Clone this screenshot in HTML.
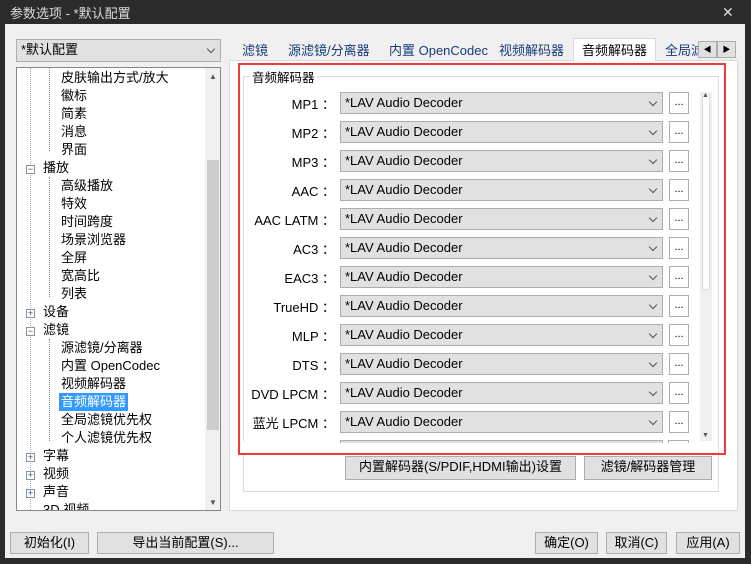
<!DOCTYPE html><html><head><meta charset="utf-8"><style>
*{box-sizing:border-box}
body{margin:0;width:751px;height:564px;background:#2b2b2b;font-family:"Liberation Sans","Noto Sans CJK SC",sans-serif;font-size:12.5px;color:#000;position:relative;overflow:hidden}
.a{position:absolute}
.title{left:10px;top:3px;color:#ddd;font-size:13px}
.win{left:5px;top:24px;width:740px;height:534px;background:#f0f0f0}
.combo{background:#e1e1e1;border:1px solid #adadad;font-size:13px;line-height:20px;padding-left:4px;white-space:nowrap}
.chev{position:absolute;right:6px;top:6px;width:6px;height:6px;border-right:1px solid #555;border-bottom:1px solid #555;transform:rotate(45deg)}
.btn{background:#e1e1e1;border:1px solid #adadad;text-align:center;line-height:20px;font-size:13px}
.tree{left:16px;top:67px;width:205px;height:444px;background:#fff;border:1px solid #828790;overflow:hidden}
.ti{position:absolute;font-size:13px;line-height:18px;white-space:nowrap}
.dot{position:absolute;border-left:1px dotted #888}
.ex{position:absolute;width:9px;height:9px;border:1px solid #919191;background:#fff;font-size:9px;line-height:7px;text-align:center;color:#1f4f9f}
.tab{position:absolute;top:40px;font-size:13px;color:#1a3a7a;white-space:nowrap}
.lbl{position:absolute;width:95px;text-align:right;font-size:13px;left:240px;white-space:nowrap}
</style></head><body>
<div class="a title">参数选项 - *默认配置</div>
<div class="a" style="left:722px;top:4px;color:#ddd;font-size:14px">✕</div>
<div class="a win"></div>
<div class="a combo" style="left:16px;top:39px;width:205px;height:23px">*默认配置<span class="chev"></span></div>
<div class="a tree">
 <div class="dot" style="left:13px;top:0;height:444px;border-color:#aaa"></div>
 <div class="dot" style="left:32px;top:0;height:83px"></div>
 <div class="ti" style="left:44px;top:1px">皮肤输出方式/放大</div>
 <div class="ti" style="left:44px;top:19px">徽标</div>
 <div class="ti" style="left:44px;top:37px">简素</div>
 <div class="ti" style="left:44px;top:55px">消息</div>
 <div class="ti" style="left:44px;top:73px">界面</div>
 <div class="ex" style="left:9px;top:97px">−</div><div class="ti" style="left:26px;top:91px">播放</div>
 <div class="dot" style="left:32px;top:109px;height:120px"></div>
 <div class="ti" style="left:44px;top:109px">高级播放</div>
 <div class="ti" style="left:44px;top:127px">特效</div>
 <div class="ti" style="left:44px;top:145px">时间跨度</div>
 <div class="ti" style="left:44px;top:163px">场景浏览器</div>
 <div class="ti" style="left:44px;top:181px">全屏</div>
 <div class="ti" style="left:44px;top:199px">宽高比</div>
 <div class="ti" style="left:44px;top:217px">列表</div>
 <div class="ex" style="left:9px;top:241px">+</div><div class="ti" style="left:26px;top:235px">设备</div>
 <div class="ex" style="left:9px;top:259px">−</div><div class="ti" style="left:26px;top:253px">滤镜</div>
 <div class="dot" style="left:32px;top:271px;height:102px"></div>
 <div class="ti" style="left:44px;top:271px">源滤镜/分离器</div>
 <div class="ti" style="left:44px;top:289px">内置 OpenCodec</div>
 <div class="ti" style="left:44px;top:307px">视频解码器</div>
 <div class="ti" style="left:42px;top:325px;background:#3399ff;color:#fff;padding:0 2px">音频解码器</div>
 <div class="ti" style="left:44px;top:343px">全局滤镜优先权</div>
 <div class="ti" style="left:44px;top:361px">个人滤镜优先权</div>
 <div class="ex" style="left:9px;top:385px">+</div><div class="ti" style="left:26px;top:379px">字幕</div>
 <div class="ex" style="left:9px;top:403px">+</div><div class="ti" style="left:26px;top:397px">视频</div>
 <div class="ex" style="left:9px;top:421px">+</div><div class="ti" style="left:26px;top:415px">声音</div>
 <div class="ti" style="left:26px;top:433px">3D 视频</div>
 <div class="a" style="left:188px;top:0;width:16px;height:442px;background:#f0f0f0"></div>
 <div class="a" style="left:190px;top:92px;width:12px;height:270px;background:#cdcdcd"></div>
 <div class="a" style="left:192px;top:4px;font-size:8px;color:#555">▲</div>
 <div class="a" style="left:192px;top:430px;font-size:8px;color:#555">▼</div>
</div>
<div class="a" style="left:229px;top:60px;width:509px;height:451px;background:#fff;border:1px solid #d9d9d9"></div>
<div class="tab" style="left:242px">滤镜</div>
<div class="tab" style="left:288px">源滤镜/分离器</div>
<div class="tab" style="left:389px">内置 OpenCodec</div>
<div class="tab" style="left:499px">视频解码器</div>
<div class="a" style="left:573px;top:38px;width:83px;height:23px;background:#fff;border:1px solid #d9d9d9;border-bottom:none"></div>
<div class="tab" style="left:582px;color:#000">音频解码器</div>
<div class="tab" style="left:665px">全局滤</div>
<div class="a btn" style="left:698px;top:41px;width:19px;height:17px;font-size:8px;line-height:15px">◀</div>
<div class="a btn" style="left:717px;top:41px;width:19px;height:17px;font-size:8px;line-height:15px">▶</div>
<div class="a" style="left:243px;top:76px;width:476px;height:416px;border:1px solid #dcdcdc"></div>
<div class="a" style="left:250px;top:67px;background:#fff;padding:0 2px">音频解码器</div>
<div class="a" style="left:700px;top:92px;width:12px;height:350px;background:#f0f0f0"></div>
<div class="a" style="left:702px;top:94px;width:8px;height:196px;background:#fff;border:1px solid #ddd"></div>
<div class="a" style="left:702px;top:92px;font-size:7px;color:#555">▲</div>
<div class="a" style="left:702px;top:432px;font-size:7px;color:#555">▼</div>
<div id="rows"></div>
<div class="a" style="left:240px;top:441px;width:476px;height:12px;background:#fff"></div>
<div class="a" style="left:340px;top:440px;width:323px;height:3px;background:#e1e1e1;border:1px solid #adadad;border-bottom:none"></div>
<div class="a" style="left:668px;top:440px;width:21px;height:3px;border:1px solid #adadad;border-bottom:none"></div>
<div class="a" style="left:238px;top:63px;width:488px;height:392px;border:2px solid #f03a3a"></div>
<div class="a btn" style="left:345px;top:456px;width:231px;height:24px">内置解码器(S/PDIF,HDMI输出)设置</div>
<div class="a btn" style="left:584px;top:456px;width:128px;height:24px">滤镜/解码器管理</div>
<div class="a btn" style="left:10px;top:532px;width:79px;height:22px">初始化(I)</div>
<div class="a btn" style="left:97px;top:532px;width:177px;height:22px">导出当前配置(S)...</div>
<div class="a btn" style="left:535px;top:532px;width:63px;height:22px">确定(O)</div>
<div class="a btn" style="left:606px;top:532px;width:61px;height:22px">取消(C)</div>
<div class="a btn" style="left:676px;top:532px;width:64px;height:22px">应用(A)</div>
<script>
var L=["MP1","MP2","MP3","AAC","AAC LATM","AC3","EAC3","TrueHD","MLP","DTS","DVD LPCM","蓝光 LPCM"],h="";
L.forEach(function(n,i){var y=92+i*29;
h+='<div class="lbl" style="top:'+(y+2)+'px">'+n+' ：</div><div class="a combo" style="left:340px;top:'+y+'px;width:323px;height:22px">*LAV Audio Decoder<span class="chev"></span></div><div class="a" style="left:669px;top:'+y+'px;width:20px;height:22px;background:#fff;border:1px solid #adadad;text-align:center;font-size:11px;line-height:18px">...</div>';});
document.getElementById("rows").innerHTML=h;
</script>
</body></html>
